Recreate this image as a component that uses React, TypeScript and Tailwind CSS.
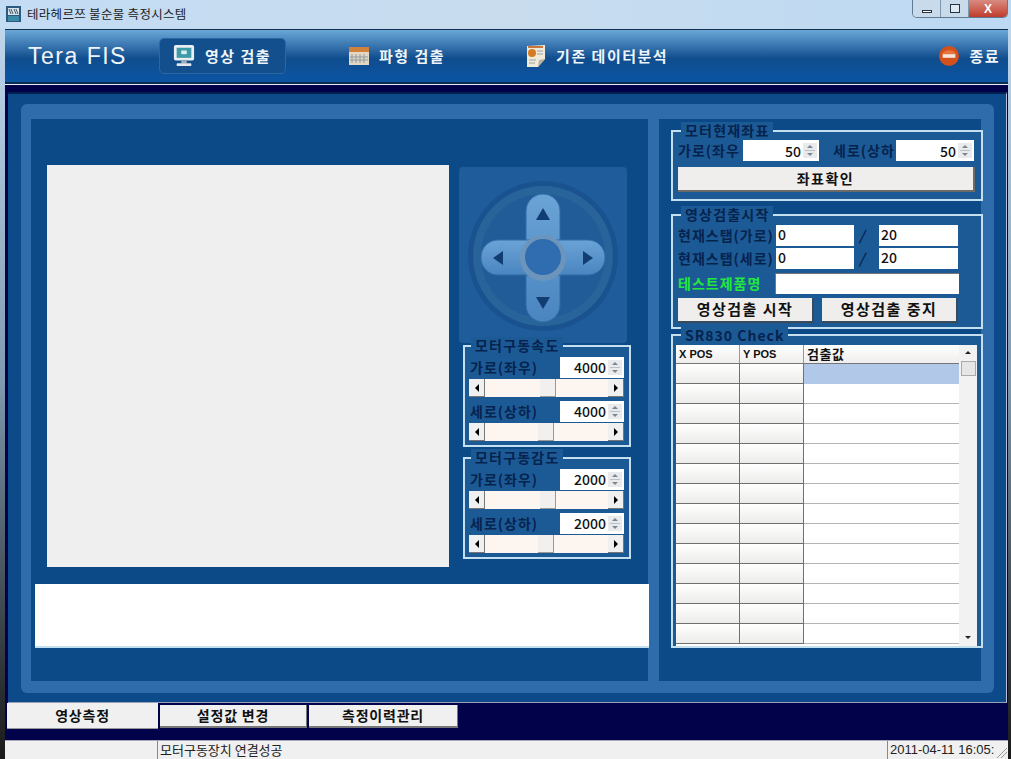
import type { ReactNode } from "react";

const FONT = "font-['Noto_Sans_CJK_KR','Noto_Sans',sans-serif]";
const LABEL = "text-[14px] font-bold tracking-[1px] whitespace-nowrap text-[#06234e]";
const NAV = "text-[15px] font-bold tracking-[1.5px] text-[#eef4fa]";

function MonitorIcon() {
  return (
    <svg width="22" height="24" viewBox="0 0 24 26" aria-hidden>
      <rect x="1" y="1" width="22" height="17" rx="2" fill="#e8eef2" />
      <rect x="4" y="4" width="16" height="11" fill="#3f9aa8" />
      <rect x="9" y="7" width="6" height="4" fill="#d8f0f0" />
      <rect x="9" y="18" width="6" height="3" fill="#9fb0bc" />
      <rect x="4" y="21" width="16" height="3" rx="1" fill="#e4e8ea" />
    </svg>
  );
}

function CalendarIcon() {
  return (
    <svg width="20" height="20" viewBox="0 0 20 20" aria-hidden>
      <rect x="0" y="1" width="20" height="18" fill="#e4d8c4" />
      <rect x="0" y="1" width="20" height="5" fill="#d0813c" />
      <path d="M3 8v9M7 8v9M11 8v9M15 8v9M1 11h18M1 14h18" stroke="#8f99a3" strokeWidth="1" />
    </svg>
  );
}

function DocIcon() {
  return (
    <svg width="20" height="24" viewBox="0 0 20 24" aria-hidden>
      <path d="M1 2 L19 1 L19 15 L12 23 L1 23 Z" fill="#f0ead8" />
      <path d="M12 23 L13 16 L19 15 Z" fill="#b8b09a" />
      <circle cx="6" cy="9" r="4" fill="#d87a20" />
      <path d="M2 3h15" stroke="#c8763a" strokeWidth="2" />
      <path d="M11 7h6M11 10h6M3 16h7M3 19h6" stroke="#9aa0a0" strokeWidth="1" />
    </svg>
  );
}

function ExitIcon() {
  return (
    <svg width="20" height="22" viewBox="0 0 22 24" aria-hidden>
      <circle cx="11" cy="12" r="11" fill="#d4501c" />
      <path d="M3 10 A9 8 0 0 1 19 10 Z" fill="#e8763c" />
      <rect x="4" y="10" width="14" height="4" fill="#f6e6dc" />
    </svg>
  );
}

function Spinner({ value, className }: { value: string; className: string }) {
  return (
    <div className={`flex items-center bg-white ${className}`}>
      <span className="flex-1 pr-[2px] text-right text-[14px] leading-none font-medium text-[#111]">{value}</span>
      <span className="mr-[2px] flex h-[15px] w-[14px] flex-col items-center justify-center gap-[2px] bg-[#e8eaec]">
        <span className="size-0 border-x-[3px] border-b-[3px] border-x-transparent border-b-[#7d8791]" />
        <span className="h-px w-[10px] bg-[#b9c0c6]" />
        <span className="size-0 border-x-[3px] border-t-[3px] border-x-transparent border-t-[#7d8791]" />
      </span>
    </div>
  );
}

function HScroll({ thumbLeft }: { thumbLeft: string }) {
  return (
    <div className="flex h-[18px] w-[155px] items-stretch bg-[#fdf6f0]">
      <span className="flex w-[16px] items-center justify-center border-r border-b border-[#777] bg-[#f0f0f0]">
        <span className="size-0 border-y-[4px] border-r-[4px] border-y-transparent border-r-black" />
      </span>
      <span className="flex flex-1">
        <span className={`${thumbLeft} w-[16px] border-r border-b border-[#999] bg-[#f2f0ee]`} />
      </span>
      <span className="flex w-[16px] items-center justify-center border-r border-b border-[#777] bg-[#f0f0f0]">
        <span className="size-0 border-y-[4px] border-l-[4px] border-y-transparent border-l-black" />
      </span>
    </div>
  );
}

function GroupBox({
  title,
  titleClass,
  className,
  children,
}: {
  title: string;
  titleClass: string;
  className: string;
  children: ReactNode;
}) {
  return (
    <div className={`relative border-2 border-[#c4e0f0] ${className}`}>
      <span
        className={`absolute -top-[10px] left-[6px] bg-[#1c5a96] px-[4px] text-[14px] leading-[16px] font-bold tracking-[1.2px] text-[#06234e] ${titleClass}`}
      >
        {title}
      </span>
      {children}
    </div>
  );
}

function SpeedGroup({ title, value, className }: { title: string; value: string; className: string }) {
  return (
    <GroupBox title={title} titleClass="" className={`h-[102px] w-[168px] bg-[#1c5a96] pt-[9px] pl-[4px] ${className}`}>
      <div className="flex h-[22px] w-[155px] items-center justify-between">
        <span className={`ml-px ${LABEL}`}>가로(좌우)</span>
        <Spinner value={value} className="h-[21px] w-[64px]" />
      </div>
      <div className="mt-[1px]">
        <HScroll thumbLeft="ml-[55px]" />
      </div>
      <div className="mt-[3px] flex h-[22px] w-[155px] items-center justify-between">
        <span className={`ml-px ${LABEL}`}>세로(상하)</span>
        <Spinner value={value} className="h-[21px] w-[64px]" />
      </div>
      <div className="mt-[1px]">
        <HScroll thumbLeft="ml-[53px]" />
      </div>
    </GroupBox>
  );
}

function Joystick() {
  return (
    <svg width="168" height="176" viewBox="0 0 168 176" aria-hidden className="rounded-[4px] bg-[#1f5c9c]">
      <defs>
        <linearGradient id="pad" x1="0" y1="0" x2="0" y2="1">
          <stop offset="0" stopColor="#6ba3d6" />
          <stop offset="1" stopColor="#4a85c0" />
        </linearGradient>
      </defs>
      <circle cx="84" cy="89" r="75" fill="#1a5290" />
      <circle cx="84" cy="89" r="70" fill="#286499" />
      <circle cx="84" cy="89" r="62" fill="#215c98" />
      <rect x="67" y="27" width="34" height="128" rx="17" fill="url(#pad)" stroke="#2f6ca8" />
      <rect x="22" y="73" width="124" height="35" rx="17" fill="url(#pad)" stroke="#2f6ca8" />
      <rect x="68" y="74" width="32" height="33" fill="#5c97cf" />
      <circle cx="84" cy="91" r="23" fill="#6d95bb" />
      <circle cx="84" cy="90" r="18" fill="#2f6db0" />
      <path d="M84 41 L91 53 L77 53 Z" fill="#123d73" />
      <path d="M84 142 L91 130 L77 130 Z" fill="#123d73" />
      <path d="M34 91 L44 84 L44 98 Z" fill="#123d73" />
      <path d="M134 91 L124 84 L124 98 Z" fill="#123d73" />
    </svg>
  );
}

const tableRows = Array.from({ length: 14 }, (_, i) => i);

export default function App() {
  return (
    <div
      className={`flex h-[759px] w-[1011px] flex-col overflow-hidden bg-gradient-to-b from-[#c4dcf2] via-[#7f9ab0] to-[#1a1a1a] ${FONT}`}
    >
      {/* title bar */}
      <div className="flex h-[29px] shrink-0 items-start justify-between bg-gradient-to-r from-[#c3dcf4] via-[#c8dcee] to-[#bcd9f3] pl-[6px]">
        <div className="flex items-center gap-[6px] pt-[6px]">
          <svg width="15" height="16" viewBox="0 0 15 16" aria-hidden>
            <rect width="15" height="16" fill="#2a5a80" />
            <rect x="2" y="2" width="11" height="7" fill="#d8e4ec" />
            <path d="M3 3l2 5M5 3l2 5M8 3l2 5M10 3l2 5" stroke="#42586a" />
            <rect x="2" y="10" width="11" height="5" fill="#3a8aa8" />
          </svg>
          <span className="text-[12.5px] leading-[16px] tracking-[0.3px] text-[#222]">테라헤르쯔 불순물 측정시스템</span>
        </div>
        <div className="mr-[3px] flex h-[18px] w-[96px] overflow-hidden rounded-b-[5px] border border-t-0 border-[#5f7a93]">
          <span className="flex w-[28px] items-end justify-center border-r border-[#7f97ad] bg-[#c9dbea] pb-[4px]">
            <span className="h-[3px] w-[10px] border border-[#27333f] bg-white" />
          </span>
          <span className="flex w-[28px] items-center justify-center border-r border-[#7f97ad] bg-[#c9dbea]">
            <span className="h-[9px] w-[10px] border border-[#27333f] bg-[#dfeaf3]" />
          </span>
          <span className="flex flex-1 items-center justify-center bg-gradient-to-b from-[#d98a80] to-[#bf3a2c] text-[12px] leading-[16px] font-bold text-white [font-family:'Liberation_Sans',sans-serif]">
            X
          </span>
        </div>
      </div>

      {/* window content */}
      <div className="mr-[3px] ml-[5px] flex min-h-0 flex-1 flex-col border-t border-[#12304e] bg-[#02024a]">
        {/* toolbar */}
        <div className="flex h-[54px] shrink-0 items-center border-b-[2px] border-[#0b2b50] bg-gradient-to-b from-[#69a8d8] via-[#0f4d8e] via-55% to-[#0b55a4]">
          <span className="ml-[23px] w-[131px] text-[23px] leading-none tracking-[1.5px] text-[#f0f4f8] [font-family:'Liberation_Sans',sans-serif]">
            Tera FIS
          </span>
          <div className={`flex h-[36px] w-[127px] items-center gap-[10px] rounded-[5px] border border-[#2a68a4] bg-[#124f8c] pl-[13px] ${NAV}`}>
            <MonitorIcon />
            <span>영상 검출</span>
          </div>
          <div className={`ml-[63px] flex items-center gap-[10px] ${NAV}`}>
            <CalendarIcon />
            <span>파형 검출</span>
          </div>
          <div className={`ml-[81px] flex items-center gap-[10px] ${NAV}`}>
            <DocIcon />
            <span>기존 데이터분석</span>
          </div>
          <div className={`mr-[8px] ml-auto flex items-center gap-[10px] ${NAV}`}>
            <ExitIcon />
            <span>종료</span>
          </div>
        </div>
        <div className="h-px shrink-0 bg-[#e8eef4]" />
        <div className="h-[7px] shrink-0 bg-[#02024a]" />

        {/* main panel */}
        <div className="mr-[1px] ml-[3px] h-[611px] shrink-0 border-t-2 border-r border-b border-[#00204f] border-r-[#b9c0dc] border-b-[#9a9fb8] bg-[#0c4a8a] pt-[10px] pr-[12px] pb-[9px] pl-[13px]">
          <div className="flex h-full gap-[11px] rounded-[6px] bg-[#2f6cab] px-[10px] pt-[15px] pb-[12px]">
            {/* left panel */}
            <div className="flex w-[617px] flex-col bg-[#0b4a87] pt-[46px] pl-[4px]">
              <div className="flex pl-[12px]">
                <div className="h-[402px] w-[402px] bg-[#efefef]" />
                <div className="mt-[2px] ml-[10px] flex w-[172px] flex-col">
                  <Joystick />
                  <SpeedGroup title="모터구동속도" value="4000" className="mt-[2px] ml-[4px]" />
                  <SpeedGroup title="모터구동감도" value="2000" className="mt-[10px] ml-[4px]" />
                </div>
              </div>
              <div className="mt-[17px] h-[64px] w-[614px] border-b-2 border-[#c4e0f0] bg-white" />
            </div>

            {/* right panel */}
            <div className="flex w-[322px] flex-col bg-[#0b4a87] pt-[11px] pl-[12px]">
              <GroupBox title="모터현재좌표" titleClass="!left-[8px]" className="h-[71px] w-[312px] bg-[#1c5a96] pl-[5px]">
                <div className="mt-[8px] flex h-[21px] items-center">
                  <span className={`w-[65px] overflow-hidden ${LABEL}`}>가로(좌우</span>
                  <Spinner value="50" className="h-[21px] w-[76px]" />
                  <span className={`ml-[14px] w-[63px] overflow-hidden ${LABEL}`}>세로(상하</span>
                  <Spinner value="50" className="h-[21px] w-[78px]" />
                </div>
                <div className="mt-[6px] flex h-[25px] w-[297px] items-center justify-center border-r-2 border-b-2 border-[#6a6a6a] bg-[#f0eeec] text-[14px] font-bold tracking-[1.5px] text-[#111]">
                  좌표확인
                </div>
              </GroupBox>

              <GroupBox title="영상검출시작" titleClass="!left-[8px]" className="mt-[13px] h-[115px] w-[312px] bg-[#1c5a96] pl-[5px]">
                <div className="mt-[9px] flex h-[21px] items-center">
                  <span className={`w-[98px] ${LABEL}`}>현재스탭(가로)</span>
                  <div className="h-[21px] w-[78px] bg-white pl-[2px] text-[14px] leading-[19px] font-medium text-[#111]">0</div>
                  <span className="w-[25px] pl-[5px] text-left text-[14px] font-bold text-[#06234e] italic">/</span>
                  <div className="h-[21px] w-[79px] bg-white pl-[2px] text-[14px] leading-[19px] font-medium text-[#111]">20</div>
                </div>
                <div className="mt-[2px] flex h-[21px] items-center">
                  <span className={`w-[98px] ${LABEL}`}>현재스탭(세로)</span>
                  <div className="h-[21px] w-[78px] bg-white pl-[2px] text-[14px] leading-[19px] font-medium text-[#111]">0</div>
                  <span className="w-[25px] pl-[5px] text-left text-[14px] font-bold text-[#06234e] italic">/</span>
                  <div className="h-[21px] w-[79px] bg-white pl-[2px] text-[14px] leading-[19px] font-medium text-[#111]">20</div>
                </div>
                <div className="mt-[4px] flex h-[21px] items-center">
                  <span className="w-[97px] text-[14px] font-bold tracking-[1px] whitespace-nowrap text-[#22e83c]">테스트제품명</span>
                  <div className="h-[21px] w-[184px] border-t border-l border-[#777] bg-white" />
                </div>
                <div className="mt-[4px] flex gap-[8px]">
                  <div className="flex h-[25px] w-[136px] items-center justify-center border-r-2 border-b-2 border-[#3a4a5a] bg-[#f0eeec] text-[15px] font-bold tracking-[1.5px] text-[#111]">
                    영상검출 시작
                  </div>
                  <div className="flex h-[25px] w-[136px] items-center justify-center border-r-2 border-b-2 border-[#3a4a5a] bg-[#f0eeec] text-[15px] font-bold tracking-[1.5px] text-[#111]">
                    영상검출 중지
                  </div>
                </div>
              </GroupBox>

              <GroupBox title="SR830 Check" titleClass="!left-[8px] !top-[-9px] !tracking-[1px]" className="mt-[5px] h-[314px] w-[312px] bg-[#1c5a96] pt-[9px] pl-[3px]">
                <div className="flex h-[301px] w-[301px] bg-white">
                  <div className="w-[283px]">
                    <div className="grid h-[19px] grid-cols-[64px_64px_155px] border-b border-[#777] bg-gradient-to-b from-white to-[#efeeec] text-[11px] leading-[18px] font-bold text-[#111]">
                      <span className="border-r border-[#999] pl-[3px] [font-family:'Liberation_Sans',sans-serif]">X POS</span>
                      <span className="border-r border-[#999] pl-[3px] [font-family:'Liberation_Sans',sans-serif]">Y POS</span>
                      <span className="pl-[3px] text-[13px] tracking-[0.5px]">검출값</span>
                    </div>
                    {tableRows.map((i) => (
                      <div key={i} className="grid h-[20px] grid-cols-[64px_64px_155px]">
                        <span className="border-r border-b border-[#707070] bg-gradient-to-b from-white to-[#ececea]" />
                        <span className="border-r border-b border-[#707070] bg-gradient-to-b from-white to-[#ececea]" />
                        <span className={i === 0 ? "bg-[#b2c8e8]" : "border-b border-[#b4b4b4] bg-white"} />
                      </div>
                    ))}
                  </div>
                  <div className="flex w-[18px] flex-col items-center bg-[#f2f2f2]">
                    <span className="mt-[6px] size-0 border-x-[3px] border-b-[3px] border-x-transparent border-b-[#222]" />
                    <span className="mt-[7px] h-[15px] w-[15px] border border-[#aaa] bg-[#e6e6e6]" />
                    <span className="mt-auto mb-[7px] size-0 border-x-[3px] border-t-[3px] border-x-transparent border-t-[#222]" />
                  </div>
                </div>
              </GroupBox>
            </div>
          </div>
        </div>

        {/* tabs */}
        <div className="flex h-[27px] shrink-0 items-start text-[14px] font-bold tracking-[0.8px] text-[#111]">
          <div className="ml-[2px] flex h-[26px] w-[151px] items-center justify-center border-b border-[#999] bg-[#f0f0f0]">영상측정</div>
          <div className="mt-[2px] ml-[2px] flex h-[23px] w-[147px] items-center justify-center border-r border-b-2 border-[#777] bg-[#f0f0f0]">설정값 변경</div>
          <div className="mt-[2px] ml-[2px] flex h-[23px] w-[149px] items-center justify-center border-r border-b-2 border-[#777] bg-[#f0f0f0]">측정이력관리</div>
        </div>
        <div className="flex-1 bg-[#02024a]" />

        {/* status bar */}
        <div className="flex h-[19px] shrink-0 border-t border-[#a8a8b8] bg-[#f0f0f0] text-[13px] leading-[18px] text-[#222]">
          <div className="w-[152px]" />
          <div className="w-[730px] border-l border-[#888] pl-[2px]">모터구동장치 연결성공</div>
          <div className="flex flex-1 justify-between overflow-hidden border-l border-[#888] pl-[2px] whitespace-nowrap [font-family:'Liberation_Sans',sans-serif]">
            <span>2011-04-11 16:05:</span>
            <svg width="12" height="18" viewBox="0 0 12 18" aria-hidden className="shrink-0">
              <path d="M1 17L11 7M5 17L11 11" stroke="#9a9a9a" />
            </svg>
          </div>
        </div>
      </div>
    </div>
  );
}
